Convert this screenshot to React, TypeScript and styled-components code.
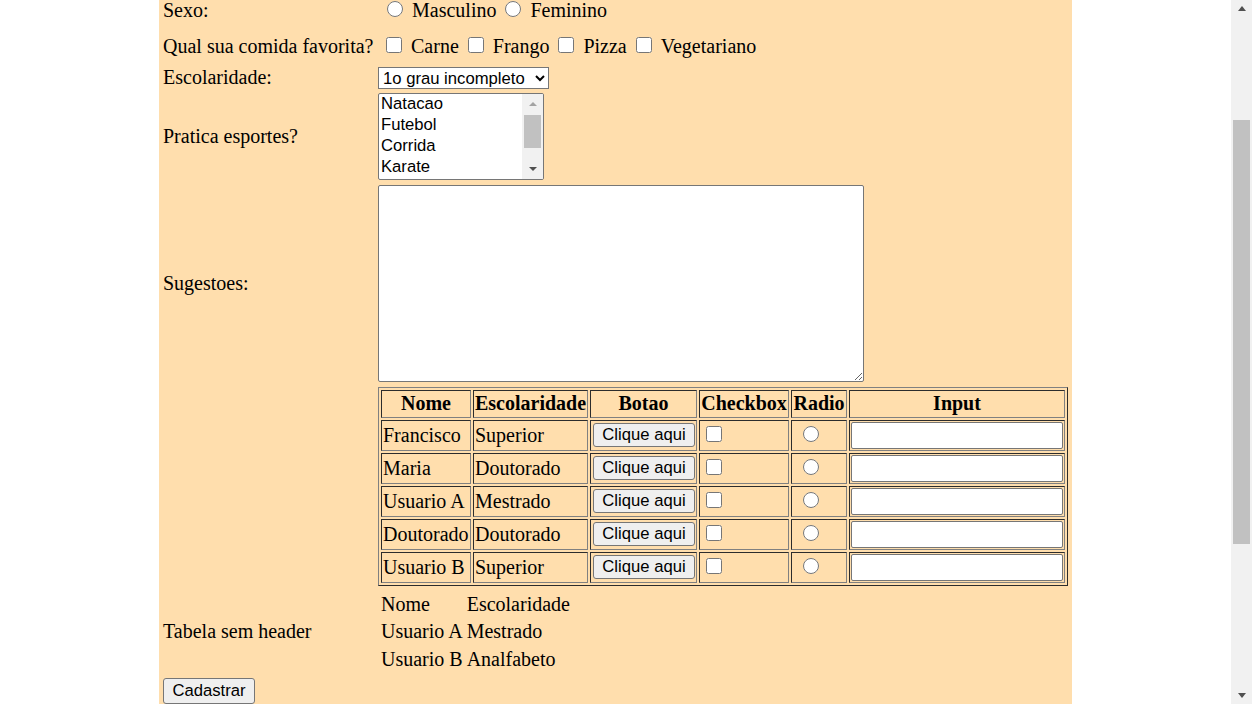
import React from 'react';
import styled, { createGlobalStyle } from 'styled-components';

const GlobalStyle = createGlobalStyle`
  html, body {
    margin: 0;
    padding: 0;
    height: 100%;
    overflow: hidden;
    background: #fff;
  }
  #root { height: 100%; }
  body {
    font-family: "Liberation Serif", "Times New Roman", serif;
    font-size: 20px;
    color: #000;
  }
`;

const controlFont = `font-family: "Liberation Sans", Arial, sans-serif; font-size: 16.67px; color: #000;`;

const Screen = styled.div`
  display: flex;
  height: 100vh;
`;

const Viewport = styled.div`
  flex: 1;
  overflow: hidden;
`;

const Page = styled.div`
  display: flow-root;
  box-sizing: border-box;
  width: 913px;
  min-height: 100%;
  margin: 0 auto;
  padding-left: 4px;
  background: #ffdead;
`;

const Form = styled.form`
  display: flex;
  flex-direction: column;
  margin-top: -6px;
`;

const Row = styled.div<{ $h?: number }>`
  display: grid;
  grid-template-columns: 215px 1fr;
  align-items: center;
  height: ${(p) => (p.$h ? `${p.$h}px` : 'auto')};
`;

const Label = styled.span`
  line-height: 23px;
  white-space: nowrap;
`;

const Field = styled.div<{ $pad?: number }>`
  display: flex;
  align-items: center;
  gap: 9px;
  padding-left: ${(p) => p.$pad ?? 0}px;
`;

const Option = styled.label`
  display: flex;
  align-items: center;
  gap: 9px;
  line-height: 23px;
  white-space: nowrap;
`;

const Radio = styled.input.attrs({ type: 'radio' })<{ $left?: number }>`
  width: 16px;
  height: 16px;
  margin: 0 0 3px ${(p) => p.$left ?? 0}px;
`;

const Check = styled.input.attrs({ type: 'checkbox' })<{ $left?: number }>`
  width: 16px;
  height: 16px;
  margin: 0 0 2px ${(p) => p.$left ?? 0}px;
`;

const Select = styled.select`
  ${controlFont}
  width: 171px;
  height: 22px;
  margin: 0;
  background: #fff;
`;

const ListBox = styled.div`
  display: flex;
  box-sizing: border-box;
  width: 166px;
  height: 87px;
  border: 1px solid #767676;
  border-radius: 2px;
  background: #fff;
  overflow: hidden;
`;

const ListOptions = styled.div`
  ${controlFont}
  flex: 1;
  padding-left: 2px;
`;

const ListOption = styled.div`
  height: 21px;
  line-height: 19px;
  white-space: nowrap;
`;

const TextArea = styled.textarea`
  box-sizing: border-box;
  width: 486px;
  height: 197px;
  margin: 0;
  border: 1px solid #767676;
  border-radius: 2px;
  background: #fff;
`;

const DataTable = styled.table`
  width: 690px;
  table-layout: fixed;
  border: 1px outset gray;
  border-spacing: 2px;
  font-size: 20px;
`;

const Th = styled.th<{ $w: number }>`
  box-sizing: border-box;
  width: ${(p) => p.$w}px;
  height: 28px;
  padding: 1px;
  border: 1px inset gray;
  font-weight: bold;
  text-align: center;
  white-space: nowrap;
`;

const Td = styled.td`
  box-sizing: border-box;
  height: 31px;
  padding: 1px;
  border: 1px inset gray;
  white-space: nowrap;
  vertical-align: middle;
`;

const CellBox = styled.div`
  display: flex;
  align-items: center;
`;

const Button = styled.button<{ $w: number; $h: number }>`
  ${controlFont}
  box-sizing: border-box;
  width: ${(p) => p.$w}px;
  height: ${(p) => p.$h}px;
  margin: 0;
  padding: 1px 6px;
  border: 1px solid #767676;
  border-radius: 3px;
  background: #efefef;
  white-space: nowrap;
`;

const CellButton = styled(Button)`
  margin-left: 1px;
`;

const TextInput = styled.input.attrs({ type: 'text' })`
  ${controlFont}
  box-sizing: border-box;
  width: 100%;
  height: 27px;
  margin: 0;
  border: 1px solid #767676;
  border-radius: 2px;
  background: #fff;
`;

const PlainTable = styled.div`
  display: grid;
  grid-template-columns: auto auto;
  justify-content: start;
  column-gap: 4px;
  row-gap: 4.5px;
  padding-left: 3px;
  padding-top: 1px;
  line-height: 23px;
`;

const Actions = styled.div`
  display: flex;
  padding-top: 4px;
`;

/* scrollbar pieces, used for the page and for the list box */
const Scrollbar = styled.div<{ $w: number }>`
  flex: none;
  display: flex;
  flex-direction: column;
  width: ${(p) => p.$w}px;
  background: #f1f1f1;
`;

const ArrowButton = styled.div<{ $h: number }>`
  flex: none;
  display: flex;
  align-items: center;
  justify-content: center;
  height: ${(p) => p.$h}px;
`;

const Triangle = styled.span<{ $dir: 'up' | 'down'; $half: number; $tall: number; $color: string }>`
  width: 0;
  height: 0;
  border-left: ${(p) => p.$half}px solid transparent;
  border-right: ${(p) => p.$half}px solid transparent;
  ${(p) =>
    p.$dir === 'up'
      ? `border-bottom: ${p.$tall}px solid ${p.$color};`
      : `border-top: ${p.$tall}px solid ${p.$color};`}
`;

const Track = styled.div`
  flex: 1;
  display: flex;
  flex-direction: column;
  align-items: center;
`;

const Thumb = styled.div<{ $top: number; $len: number; $w: number }>`
  flex: none;
  width: ${(p) => p.$w}px;
  height: ${(p) => p.$len}px;
  margin-top: ${(p) => p.$top}px;
  background: #c1c1c1;
`;

interface BarProps {
  width: number;
  button: number;
  thumbTop: number;
  thumbLen: number;
  thumbW: number;
  half: number;
  tall: number;
  upColor: string;
  downColor: string;
}

function Bar(p: BarProps) {
  return (
    <Scrollbar $w={p.width}>
      <ArrowButton $h={p.button}>
        <Triangle $dir="up" $half={p.half} $tall={p.tall} $color={p.upColor} />
      </ArrowButton>
      <Track>
        <Thumb $top={p.thumbTop} $len={p.thumbLen} $w={p.thumbW} />
      </Track>
      <ArrowButton $h={p.button}>
        <Triangle $dir="down" $half={p.half} $tall={p.tall} $color={p.downColor} />
      </ArrowButton>
    </Scrollbar>
  );
}

const esportes = ['Natacao', 'Futebol', 'Corrida', 'Karate', 'Basquete', 'Volei'];

const usuarios = [
  ['Francisco', 'Superior'],
  ['Maria', 'Doutorado'],
  ['Usuario A', 'Mestrado'],
  ['Doutorado', 'Doutorado'],
  ['Usuario B', 'Superior'],
];

const semHeader = [
  ['Nome', 'Escolaridade'],
  ['Usuario A', 'Mestrado'],
  ['Usuario B', 'Analfabeto'],
];

export default function App() {
  return (
    <>
      <GlobalStyle />
      <Screen>
        <Viewport>
          <Page>
            <Form onSubmit={(e) => e.preventDefault()}>
              <Row $h={33}>
                <Label>Sexo:</Label>
                <Field $pad={9}>
                  <Option>
                    <Radio name="sexo" />
                    Masculino
                  </Option>
                  <Option>
                    <Radio name="sexo" />
                    Feminino
                  </Option>
                </Field>
              </Row>

              <Row $h={38}>
                <Label>Qual sua comida favorita?</Label>
                <Field $pad={8}>
                  {['Carne', 'Frango', 'Pizza', 'Vegetariano'].map((c) => (
                    <Option key={c}>
                      <Check />
                      {c}
                    </Option>
                  ))}
                </Field>
              </Row>

              <Row $h={25}>
                <Label>Escolaridade:</Label>
                <Field>
                  <Select defaultValue="1">
                    <option value="1">1o grau incompleto</option>
                    <option value="2">1o grau completo</option>
                    <option value="3">2o grau completo</option>
                    <option value="4">Superior</option>
                  </Select>
                </Field>
              </Row>

              <Row $h={93}>
                <Label>Pratica esportes?</Label>
                <Field>
                  <ListBox>
                    <ListOptions>
                      {esportes.slice(0, 4).map((s) => (
                        <ListOption key={s}>{s}</ListOption>
                      ))}
                    </ListOptions>
                    <Bar
                      width={21}
                      button={20}
                      thumbTop={1}
                      thumbLen={33}
                      thumbW={17}
                      half={4}
                      tall={4}
                      upColor="#a3a3a3"
                      downColor="#505050"
                    />
                  </ListBox>
                </Field>
              </Row>

              <Row $h={201}>
                <Label>Sugestoes:</Label>
                <Field>
                  <TextArea />
                </Field>
              </Row>

              <Row $h={204}>
                <Label />
                <Field>
                  <DataTable>
                    <thead>
                      <tr>
                        <Th $w={90}>Nome</Th>
                        <Th $w={115}>Escolaridade</Th>
                        <Th $w={107}>Botao</Th>
                        <Th $w={90}>Checkbox</Th>
                        <Th $w={56}>Radio</Th>
                        <Th $w={216}>Input</Th>
                      </tr>
                    </thead>
                    <tbody>
                      {usuarios.map(([nome, esc], i) => (
                        <tr key={i}>
                          <Td>{nome}</Td>
                          <Td>{esc}</Td>
                          <Td>
                            <CellBox>
                              <CellButton type="button" $w={102} $h={24}>
                                Clique aqui
                              </CellButton>
                            </CellBox>
                          </Td>
                          <Td>
                            <CellBox>
                              <Check $left={5} />
                            </CellBox>
                          </Td>
                          <Td>
                            <CellBox>
                              <Radio name={`r${i}`} $left={10} />
                            </CellBox>
                          </Td>
                          <Td>
                            <CellBox>
                              <TextInput />
                            </CellBox>
                          </Td>
                        </tr>
                      ))}
                    </tbody>
                  </DataTable>
                </Field>
              </Row>

              <Row $h={86}>
                <Label>Tabela sem header</Label>
                <Field>
                  <PlainTable>
                    {semHeader.map(([a, b]) => (
                      <React.Fragment key={a + b}>
                        <span>{a}</span>
                        <span>{b}</span>
                      </React.Fragment>
                    ))}
                  </PlainTable>
                </Field>
              </Row>

              <Actions>
                <Button type="submit" $w={92} $h={26}>
                  Cadastrar
                </Button>
              </Actions>
            </Form>
          </Page>
        </Viewport>
        <Bar
          width={21}
          button={17}
          thumbTop={103}
          thumbLen={424}
          thumbW={17}
          half={4.5}
          tall={5}
          upColor="#505050"
          downColor="#505050"
        />
      </Screen>
    </>
  );
}
